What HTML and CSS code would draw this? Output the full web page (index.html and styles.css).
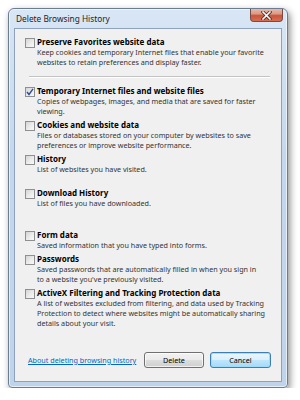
FILE: index.html
```
<!DOCTYPE html>
<html lang="en">
<head>
    <meta charset="UTF-8">
    <title>Delete Browsing History</title>
    <link rel="stylesheet" href="styles.css">
</head>
<body>

    <div class="window">
        <div class="titlebar">
            <span class="title">Delete Browsing History</span>
            <div class="close">
                <svg width="11" height="9" viewBox="0 0 11 9">
                    <path d="M2 1 L9 8 M9 1 L2 8" stroke="#5a2a20" stroke-width="3.2" stroke-linecap="square"/>
                    <path d="M2 1 L9 8 M9 1 L2 8" stroke="#ffffff" stroke-width="1.6" stroke-linecap="square"/>
                </svg>
            </div>
        </div>

        <div class="client">
            <div class="item">
                <span class="box"></span>
                <div class="text">
                    <div class="label">Preserve Favorites website data</div>
                    <div class="desc">Keep cookies and temporary Internet files that enable your favorite<br>websites to retain preferences and display faster.</div>
                </div>
            </div>

            <div class="separator"></div>

            <div class="item first">
                <span class="box checked">
                    <svg width="8" height="8" viewBox="0 0 8 8">
                        <path d="M1 4 L3 6.5 L7 0.8" fill="none" stroke="#2a4f9a" stroke-width="1.4"/>
                    </svg>
                </span>
                <div class="text">
                    <div class="label">Temporary Internet files and website files</div>
                    <div class="desc">Copies of webpages, images, and media that are saved for faster<br>viewing.</div>
                </div>
            </div>

            <div class="item">
                <span class="box"></span>
                <div class="text">
                    <div class="label">Cookies and website data</div>
                    <div class="desc">Files or databases stored on your computer by websites to save<br>preferences or improve website performance.</div>
                </div>
            </div>

            <div class="item">
                <span class="box"></span>
                <div class="text">
                    <div class="label">History</div>
                    <div class="desc">List of websites you have visited.</div>
                </div>
            </div>

            <div class="item gap-md">
                <span class="box"></span>
                <div class="text">
                    <div class="label">Download History</div>
                    <div class="desc">List of files you have downloaded.</div>
                </div>
            </div>

            <div class="item gap-lg">
                <span class="box"></span>
                <div class="text">
                    <div class="label">Form data</div>
                    <div class="desc">Saved information that you have typed into forms.</div>
                </div>
            </div>

            <div class="item">
                <span class="box"></span>
                <div class="text">
                    <div class="label">Passwords</div>
                    <div class="desc">Saved passwords that are automatically filled in when you sign in<br>to a website you've previously visited.</div>
                </div>
            </div>

            <div class="item">
                <span class="box"></span>
                <div class="text">
                    <div class="label">ActiveX Filtering and Tracking Protection data</div>
                    <div class="desc">A list of websites excluded from filtering, and data used by Tracking<br>Protection to detect where websites might be automatically sharing<br>details about your visit.</div>
                </div>
            </div>

            <div class="footer">
                <a href="#" class="help">About deleting browsing history</a>
                <button type="button" class="btn">Delete</button>
                <button type="button" class="btn default">Cancel</button>
            </div>
        </div>
    </div>

</body>
</html>
```

FILE: styles.css
```
body {
    margin: 0;
    background: #ffffff;
    font-family: "Noto Sans", "Open Sans", sans-serif;
}

.window {
    margin: 8px 0 0 8px;
    width: 280px;
    height: 380px;
    box-sizing: border-box;
    display: flex;
    flex-direction: column;
    border: 1px solid #6b7d92;
    border-radius: 6px 6px 4px 4px;
    background: linear-gradient(180deg, #d8e6f5 0%, #c4d7ec 40%, #bfd3ea 100%);
    box-shadow: 2px 3px 7px rgba(0, 0, 0, 0.45), inset 0 0 0 1px rgba(255, 255, 255, 0.6);
}

.titlebar {
    height: 19px;
    display: flex;
    align-items: flex-start;
    padding-left: 7px;
}

.title {
    font-size: 8.3px;
    line-height: 19px;
    color: #1e1e1e;
}

.close {
    margin-left: auto;
    margin-right: 4px;
    width: 33px;
    height: 13px;
    box-sizing: border-box;
    border: 1px solid #7a4a40;
    border-top: none;
    border-radius: 0 0 4px 4px;
    background: linear-gradient(180deg, #e7b8a8 0%, #dc9a84 40%, #c9553c 55%, #d56f52 100%);
    display: flex;
    align-items: center;
    justify-content: center;
}

.client {
    flex: 1;
    margin: 0 5px 5px 5px;
    border: 1px solid #8ea3bb;
    background: #f0f0f0;
    display: flex;
    flex-direction: column;
    padding: 8px 0 0 10px;
}

.item {
    display: flex;
    gap: 2px;
    margin-top: 4px;
}

.item:first-child {
    margin-top: 0;
}

.item.first {
    margin-top: 8px;
}

.item.gap-md {
    margin-top: 14px;
}

.item.gap-lg {
    margin-top: 22px;
}

.box {
    flex: none;
    width: 10px;
    height: 10px;
    margin-top: 1px;
    box-sizing: border-box;
    border: 1px solid #8e8f8f;
    background: linear-gradient(135deg, #d4d4d4 0%, #eeeeee 60%, #f8f8f8 100%);
    display: flex;
    align-items: center;
    justify-content: center;
}

.label {
    font-size: 8px;
    font-weight: bold;
    line-height: 10px;
    color: #000000;
    white-space: nowrap;
}

.desc {
    font-size: 7.2px;
    line-height: 10px;
    color: #333333;
    white-space: nowrap;
}

.separator {
    margin: 9px 0 0 4px;
    width: 241px;
    height: 1px;
    background: #c3c3c3;
    border-bottom: 1px solid #ffffff;
}

.footer {
    margin-top: auto;
    display: flex;
    align-items: center;
    gap: 6px;
    padding: 0 10px 13px 3px;
}

.help {
    margin-right: auto;
    font-size: 7.2px;
    color: #0066cc;
}

.btn {
    width: 60px;
    height: 16px;
    padding: 0;
    font-family: inherit;
    font-size: 7.2px;
    color: #000000;
    border: 1px solid #707070;
    border-radius: 3px;
    background: linear-gradient(180deg, #f2f2f2 0%, #ebebeb 50%, #dddddd 51%, #cfcfcf 100%);
    box-shadow: inset 0 0 0 1px rgba(255, 255, 255, 0.7);
}

.btn.default {
    width: 61px;
    border-color: #3c7fb1;
    background: linear-gradient(180deg, #eaf6fd 0%, #d9f0fc 50%, #bee6fd 51%, #a7d9f5 100%);
    box-shadow: inset 0 0 0 1px rgba(150, 220, 255, 0.9);
}
```
